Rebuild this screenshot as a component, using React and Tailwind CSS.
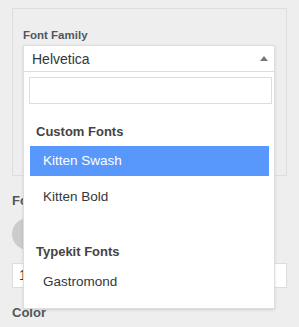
import React from 'react';

const groups = [
  { label: 'Custom Fonts', items: ['Kitten Swash', 'Kitten Bold'] },
  { label: 'Typekit Fonts', items: ['Gastromond'] },
];

export default function App() {
  return <div className="relative w-[299px] h-[327px] overflow-hidden bg-[#eeeeee] px-3 pt-2 font-['Liberation_Sans',Arial,sans-serif] text-[#32373c]">
      <div className="h-[168px] border border-[#dddddd] px-[10px] pt-[19px]">
        <div className="text-[11.5px] leading-[14px] font-bold text-[#50575e]">Font Family</div>
      </div>

      <div className="mt-[17px] text-[13px] leading-[16px] font-bold text-[#50575e]">Font Size</div>
      <div className="mt-[9px] w-8 h-8 rounded-full bg-[#cccccc]" />
      <div className="mt-[13px] h-[25px] border border-[#dddddd] bg-white pl-[6px] text-[14px] leading-[23px]">14</div>
      <div className="mt-[17px] text-[13px] leading-[16px] font-bold text-[#50575e]">Color</div>

      <div className="absolute left-[23px] top-[45px] w-[252px] h-[264px] border border-[#dddddd] bg-white shadow-sm">
        <div className="h-[26px] border-b border-[#dddddd] flex items-center justify-between pl-[8px] pr-[6px]">
          <span className="text-[14px] leading-[18px] text-[#32373c]">Helvetica</span>
          <span className="w-0 h-0 border-x-4 border-x-transparent border-b-[5px] border-b-[#777777]" />
        </div>
        <div className="ml-[5px] mr-[2px] mt-[5px] h-[27px] border border-[#dddddd] bg-white" />
        {groups.map((g, gi) => <div key={g.label} className={gi === 0 ? 'mt-[18px]' : 'mt-[30px]'}>
            <div className="pl-[12px] text-[13px] leading-[20px] font-bold text-[#444444]">{g.label}</div>
            <div className={gi === 0 ? 'mt-[4px] space-y-[6px]' : 'mt-[5px]'}>
              {g.items.map((item, i) => <div key={item} className={`ml-[6px] mr-[5px] h-[30px] flex items-center pl-[13px] text-[13.5px] ${gi === 0 && i === 0 ? 'bg-[#5897fb] text-white' : 'text-[#32373c]'}`}>
                  {item}
                </div>)}
            </div>
          </div>)}
      </div>
    </div>;
}
